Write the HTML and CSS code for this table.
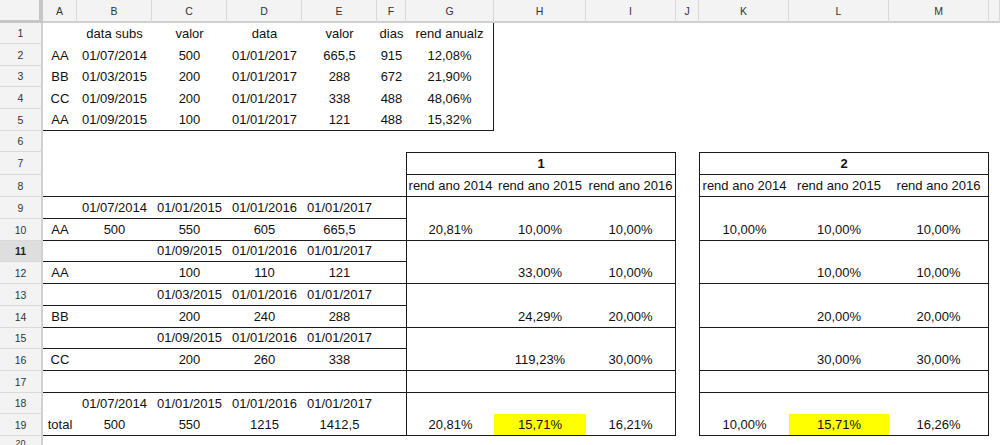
FILE: index.html
```html
<!DOCTYPE html>
<html lang="pt">
<head>
<meta charset="utf-8">
<title>Planilha</title>
<link rel="stylesheet" href="styles.css">
</head>
<body>
<div class="sheet">
  <div class="corner"></div>
  <div class="ch">A</div><div class="ch">B</div><div class="ch">C</div><div class="ch">D</div><div class="ch">E</div><div class="ch">F</div><div class="ch">G</div><div class="ch">H</div><div class="ch">I</div><div class="ch">J</div><div class="ch">K</div><div class="ch">L</div><div class="ch">M</div><div class="ch"></div>

  <div class="rh">1</div>
  <div class="c"></div><div class="c">data subs</div><div class="c">valor</div><div class="c">data</div><div class="c">valor</div><div class="c">dias</div><div class="c br">rend anualz</div>
  <div class="c"></div><div class="c"></div><div class="c"></div><div class="c"></div><div class="c"></div><div class="c"></div><div class="c"></div>

  <div class="rh">2</div>
  <div class="c">AA</div><div class="c">01/07/2014</div><div class="c">500</div><div class="c">01/01/2017</div><div class="c">665,5</div><div class="c">915</div><div class="c br">12,08%</div>
  <div class="c"></div><div class="c"></div><div class="c"></div><div class="c"></div><div class="c"></div><div class="c"></div><div class="c"></div>

  <div class="rh">3</div>
  <div class="c">BB</div><div class="c">01/03/2015</div><div class="c">200</div><div class="c">01/01/2017</div><div class="c">288</div><div class="c">672</div><div class="c br">21,90%</div>
  <div class="c"></div><div class="c"></div><div class="c"></div><div class="c"></div><div class="c"></div><div class="c"></div><div class="c"></div>

  <div class="rh">4</div>
  <div class="c">CC</div><div class="c">01/09/2015</div><div class="c">200</div><div class="c">01/01/2017</div><div class="c">338</div><div class="c">488</div><div class="c br">48,06%</div>
  <div class="c"></div><div class="c"></div><div class="c"></div><div class="c"></div><div class="c"></div><div class="c"></div><div class="c"></div>

  <div class="rh">5</div>
  <div class="c bb">AA</div><div class="c bb">01/09/2015</div><div class="c bb">100</div><div class="c bb">01/01/2017</div><div class="c bb">121</div><div class="c bb">488</div><div class="c bb br">15,32%</div>
  <div class="c"></div><div class="c"></div><div class="c"></div><div class="c"></div><div class="c"></div><div class="c"></div><div class="c"></div>

  <div class="rh">6</div>
  <div class="c"></div><div class="c"></div><div class="c"></div><div class="c"></div><div class="c"></div><div class="c"></div><div class="c"></div>
  <div class="c"></div><div class="c"></div><div class="c"></div><div class="c"></div><div class="c"></div><div class="c"></div><div class="c"></div>

  <div class="rh">7</div>
  <div class="c"></div><div class="c"></div><div class="c"></div><div class="c"></div><div class="c"></div><div class="c"></div>
  <div class="c s3 bt bl br bb b">1</div>
  <div class="c"></div>
  <div class="c s3 bt bl br bb b">2</div>
  <div class="c"></div>

  <div class="rh">8</div>
  <div class="c bb"></div><div class="c bb"></div><div class="c bb"></div><div class="c bb"></div><div class="c bb"></div><div class="c bb"></div>
  <div class="c bl bb">rend ano 2014</div><div class="c bb">rend ano 2015</div><div class="c br bb">rend ano 2016</div>
  <div class="c"></div>
  <div class="c bl bb">rend ano 2014</div><div class="c bb">rend ano 2015</div><div class="c br bb">rend ano 2016</div>
  <div class="c"></div>

  <div class="rh">9</div>
  <div class="c bb"></div><div class="c bb">01/07/2014</div><div class="c bb">01/01/2015</div><div class="c bb">01/01/2016</div><div class="c bb">01/01/2017</div><div class="c bb"></div>
  <div class="c bl"></div><div class="c"></div><div class="c br"></div>
  <div class="c"></div>
  <div class="c bl"></div><div class="c"></div><div class="c br"></div>
  <div class="c"></div>

  <div class="rh">10</div>
  <div class="c bb">AA</div><div class="c bb">500</div><div class="c bb">550</div><div class="c bb">605</div><div class="c bb">665,5</div><div class="c bb"></div>
  <div class="c bl bb">20,81%</div><div class="c bb">10,00%</div><div class="c br bb">10,00%</div>
  <div class="c"></div>
  <div class="c bl bb">10,00%</div><div class="c bb">10,00%</div><div class="c br bb">10,00%</div>
  <div class="c"></div>

  <div class="rh sel">11</div>
  <div class="c bb"></div><div class="c bb"></div><div class="c bb">01/09/2015</div><div class="c bb">01/01/2016</div><div class="c bb">01/01/2017</div><div class="c bb"></div>
  <div class="c bl"></div><div class="c"></div><div class="c br"></div>
  <div class="c"></div>
  <div class="c bl"></div><div class="c"></div><div class="c br"></div>
  <div class="c"></div>

  <div class="rh">12</div>
  <div class="c bb">AA</div><div class="c bb"></div><div class="c bb">100</div><div class="c bb">110</div><div class="c bb">121</div><div class="c bb"></div>
  <div class="c bl bb"></div><div class="c bb">33,00%</div><div class="c br bb">10,00%</div>
  <div class="c"></div>
  <div class="c bl bb"></div><div class="c bb">10,00%</div><div class="c br bb">10,00%</div>
  <div class="c"></div>

  <div class="rh">13</div>
  <div class="c bb"></div><div class="c bb"></div><div class="c bb">01/03/2015</div><div class="c bb">01/01/2016</div><div class="c bb">01/01/2017</div><div class="c bb"></div>
  <div class="c bl"></div><div class="c"></div><div class="c br"></div>
  <div class="c"></div>
  <div class="c bl"></div><div class="c"></div><div class="c br"></div>
  <div class="c"></div>

  <div class="rh">14</div>
  <div class="c bb">BB</div><div class="c bb"></div><div class="c bb">200</div><div class="c bb">240</div><div class="c bb">288</div><div class="c bb"></div>
  <div class="c bl bb"></div><div class="c bb">24,29%</div><div class="c br bb">20,00%</div>
  <div class="c"></div>
  <div class="c bl bb"></div><div class="c bb">20,00%</div><div class="c br bb">20,00%</div>
  <div class="c"></div>

  <div class="rh">15</div>
  <div class="c bb"></div><div class="c bb"></div><div class="c bb">01/09/2015</div><div class="c bb">01/01/2016</div><div class="c bb">01/01/2017</div><div class="c bb"></div>
  <div class="c bl"></div><div class="c"></div><div class="c br"></div>
  <div class="c"></div>
  <div class="c bl"></div><div class="c"></div><div class="c br"></div>
  <div class="c"></div>

  <div class="rh">16</div>
  <div class="c bb">CC</div><div class="c bb"></div><div class="c bb">200</div><div class="c bb">260</div><div class="c bb">338</div><div class="c bb"></div>
  <div class="c bl bb"></div><div class="c bb">119,23%</div><div class="c br bb">30,00%</div>
  <div class="c"></div>
  <div class="c bl bb"></div><div class="c bb">30,00%</div><div class="c br bb">30,00%</div>
  <div class="c"></div>

  <div class="rh">17</div>
  <div class="c bb"></div><div class="c bb"></div><div class="c bb"></div><div class="c bb"></div><div class="c bb"></div><div class="c bb"></div>
  <div class="c bl bb"></div><div class="c bb"></div><div class="c br bb"></div>
  <div class="c"></div>
  <div class="c bl bb"></div><div class="c bb"></div><div class="c br bb"></div>
  <div class="c"></div>

  <div class="rh">18</div>
  <div class="c"></div><div class="c">01/07/2014</div><div class="c">01/01/2015</div><div class="c">01/01/2016</div><div class="c">01/01/2017</div><div class="c"></div>
  <div class="c bl"></div><div class="c"></div><div class="c br"></div>
  <div class="c"></div>
  <div class="c bl"></div><div class="c"></div><div class="c br"></div>
  <div class="c"></div>

  <div class="rh">19</div>
  <div class="c bb">total</div><div class="c bb">500</div><div class="c bb">550</div><div class="c bb">1215</div><div class="c bb">1412,5</div><div class="c bb"></div>
  <div class="c bl bb">20,81%</div><div class="c bb y">15,71%</div><div class="c br bb">16,21%</div>
  <div class="c"></div>
  <div class="c bl bb">10,00%</div><div class="c bb y">15,71%</div><div class="c br bb">16,26%</div>
  <div class="c"></div>

  <div class="rh last">20</div>
  <div class="c"></div><div class="c"></div><div class="c"></div><div class="c"></div><div class="c"></div><div class="c"></div><div class="c"></div>
  <div class="c"></div><div class="c"></div><div class="c"></div><div class="c"></div><div class="c"></div><div class="c"></div><div class="c"></div>
</div>
</body>
</html>
```

FILE: styles.css
```css
* {
  box-sizing: border-box;
}

html, body {
  margin: 0;
  padding: 0;
  background: #ffffff;
  overflow: hidden;
}

body {
  font-family: "Liberation Sans", Arial, sans-serif;
}

.sheet {
  display: grid;
  grid-template-columns: 43px 34px 75px 75px 75px 75px 29px 88px 92px 90px 23px 90px 100px 100px 1fr;
  grid-template-rows: 23px 21px 22px 21px 22px 22px 21px 23px 22px 22px 22px 21px 22px 22px 22px 21px 22px 22px 21px 22px 9px;
  width: 1000px;
  height: 445px;
  overflow: hidden;
}

.corner {
  background: #f3f3f3;
  border-right: 4px solid #c6c6c6;
  border-bottom: 3px solid #c6c6c6;
}

.ch {
  background: #f3f3f3;
  border-right: 1px solid #d9d9d9;
  border-bottom: 2px solid #d0d0d0;
  display: flex;
  align-items: center;
  justify-content: center;
  font-size: 10.5px;
  color: #333333;
  padding-top: 1px;
}

.rh {
  background: #f3f3f3;
  border-right: 2px solid #d0d0d0;
  border-bottom: 1px solid #d9d9d9;
  display: flex;
  align-items: center;
  justify-content: center;
  font-size: 10.5px;
  color: #333333;
}

.rh.sel {
  background: #dedede;
  font-weight: bold;
  color: #222222;
}

.rh.last {
  border-bottom: 0;
  align-items: flex-start;
  font-size: 9px;
  line-height: 9px;
  padding-top: 3px;
  overflow: hidden;
}

.c {
  display: flex;
  align-items: flex-end;
  justify-content: center;
  font-size: 13px;
  line-height: 16px;
  padding-bottom: 2px;
  color: #111111;
  white-space: nowrap;
  min-width: 0;
}

.s3 {
  grid-column: span 3;
}

.b {
  font-weight: bold;
}

.y {
  background: #ffff00;
}

.bb {
  border-bottom: 1px solid #1a1a1a;
}

.bt {
  border-top: 1px solid #1a1a1a;
}

.bl {
  border-left: 1px solid #1a1a1a;
}

.br {
  border-right: 1px solid #1a1a1a;
}
```
